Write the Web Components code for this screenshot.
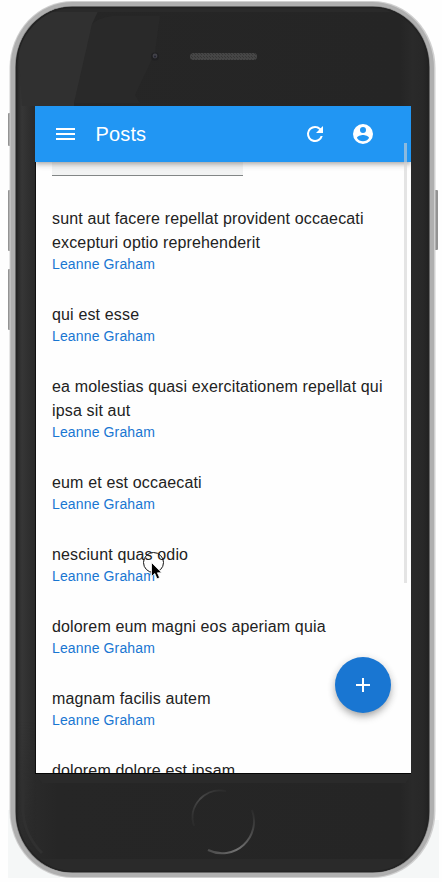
<!DOCTYPE html>
<html lang="en">
<head>
<meta charset="utf-8">
<title>Posts</title>
<style>
html, body { margin: 0; height: 100%; overflow: hidden; background: #fefefe; font-family: "Liberation Sans", Arial, sans-serif; }
</style>
</head>
<body>
<phone-frame>
  <app-screen>
    <app-header slot="header" heading="Posts"></app-header>
    <filter-field></filter-field>
    <post-item author="Leanne Graham">sunt aut facere repellat provident occaecati excepturi optio reprehenderit</post-item>
    <post-item author="Leanne Graham">qui est esse</post-item>
    <post-item author="Leanne Graham">ea molestias quasi exercitationem repellat qui ipsa sit aut</post-item>
    <post-item author="Leanne Graham">eum et est occaecati</post-item>
    <post-item author="Leanne Graham">nesciunt quas odio</post-item>
    <post-item author="Leanne Graham">dolorem eum magni eos aperiam quia</post-item>
    <post-item author="Leanne Graham">magnam facilis autem</post-item>
    <post-item>dolorem dolore est ipsam</post-item>
    <add-button slot="overlay"></add-button>
    <touch-pointer slot="overlay"></touch-pointer>
  </app-screen>
</phone-frame>
<script>
function define(name, html, init) {
  const template = document.createElement('template');
  template.innerHTML = html;
  customElements.define(name, class extends HTMLElement {
    constructor() {
      super();
      this.attachShadow({ mode: 'open' }).append(template.content.cloneNode(true));
    }
    connectedCallback() { if (init) init(this, this.shadowRoot); }
  });
}

define('phone-frame', `
<style>
:host { display: block; position: relative; width: 442px; height: 882px; overflow: hidden; }
svg { position: absolute; inset: 0; }
.screen { position: relative; box-sizing: border-box; width: 442px; height: 882px; padding: 106px 31px 108px 35px; }
</style>
<svg width="442" height="882" viewBox="0 0 442 882">
  <defs>
    <linearGradient id="side" x1="0" x2="1">
      <stop offset="0" stop-color="#262626"/><stop offset=".01" stop-color="#2c2c2c"/>
      <stop offset=".1" stop-color="#262626"/>
      <stop offset=".93" stop-color="#252525"/><stop offset=".96" stop-color="#2a2a2a"/>
      <stop offset=".985" stop-color="#282828"/><stop offset="1" stop-color="#222"/>
    </linearGradient>
    <linearGradient id="rail" x1="0" x2="1"><stop offset="0" stop-color="#262626"/><stop offset=".3" stop-color="#363636"/><stop offset=".65" stop-color="#2f2f2f"/><stop offset="1" stop-color="#292929"/></linearGradient>
    <linearGradient id="fade" x1="0" y1="0" x2="0" y2="1"><stop offset="0" stop-color="#fff"/><stop offset=".85" stop-color="#fff"/><stop offset="1" stop-color="#000"/></linearGradient>
    <mask id="railMask"><rect x="16" y="7" width="90" height="840" fill="url(#fade)"/></mask>
    <pattern id="mesh" width="3" height="3" patternUnits="userSpaceOnUse"><rect width="3" height="3" fill="#464646"/><path d="M0 0h1v1H0zM2 2h1v1H2z" fill="#363636"/></pattern>
    <linearGradient id="ringA" x1="0" y1="1" x2="1" y2="0"><stop offset="0" stop-color="#292929"/><stop offset=".5" stop-color="#484848"/><stop offset="1" stop-color="#292929"/></linearGradient>
    <linearGradient id="ringB" x1="0" y1="1" x2="1" y2="0"><stop offset="0" stop-color="#484848"/><stop offset=".35" stop-color="#737373"/><stop offset="1" stop-color="#292929"/></linearGradient>
    <clipPath id="body"><rect x="16" y="7" width="413" height="865" rx="56" ry="60"/></clipPath>
  </defs>
  <path d="M8 810H60V878H8zM380 820H439V878H380z" fill="#f5f7f7"/>
  <g fill="#939393">
    <rect x="8" y="113" width="4" height="33" rx="1"/><rect x="8" y="190" width="4" height="61" rx="1"/>
    <rect x="8" y="269" width="4" height="61" rx="1"/><rect x="433" y="190" width="5" height="60" rx="1"/>
  </g>
  <rect x="9.5" y="1" width="426" height="877" rx="63" ry="67" fill="#d0d0d0"/>
  <rect x="10.5" y="2" width="423.500" height="875" rx="62" ry="66" fill="#afafaf"/>
  <rect x="15" y="6" width="415" height="867" rx="57" ry="61" fill="#808080"/>
  <rect x="16" y="7" width="413" height="865" rx="56" ry="60" fill="url(#side)"/>
  <g clip-path="url(#body)">
    <path d="M92 24Q98 18 112 16H160L155 53L135 95L140 103H74L78 75z" fill="#292929"/>
    <g mask="url(#railMask)">
      <path d="M16 60H36V850H16z" fill="url(#rail)"/>
      <path d="M16 7H100L92 24L74 103V106H22z" fill="#303030"/>
    </g>
    <path d="M16 7H429V12H16zM16 859H429V872H16z" fill="#2a2a2a"/>
    <path d="M35 774H411L406 783H42z" fill="#2a2a2a"/>
    <path d="M23 780V812Q25 836 42 853" fill="none" stroke="#303030" stroke-width="3"/>
  </g>
  <rect x="16.500" y="7.500" width="412" height="864" rx="56" ry="60" fill="none" stroke="#232323" stroke-width="1.500"/>
  <circle cx="155" cy="56.500" r="4" fill="#202022"/><circle cx="155" cy="56" r="2.400" fill="#424248"/><circle cx="155" cy="56.500" r="1" fill="#222230"/>
  <rect x="190" y="53" width="67" height="7" rx="3.500" fill="url(#mesh)"/>
  <path d="M194 826Q189 811 200 799Q211 788 226 791" fill="none" stroke="url(#ringA)" stroke-width="1.800"/>
  <path d="M208 850A32 32 0 0 0 252 810" fill="none" stroke="url(#ringB)" stroke-width="2"/>
</svg>
<div class="screen"><slot></slot></div>`);

define('app-screen', `
<style>
:host { display: flex; flex-direction: column; position: relative; height: 668px; box-sizing: border-box; overflow: hidden; background: #fefefe; border-bottom: 1px solid #050505; }
.list { flex: 1; min-height: 0; overflow: hidden; padding: 0 16px; border-left: 1px solid #101010; }
.thumb { position: absolute; z-index: 3; left: 369px; top: 37px; width: 3px; height: 440px; background: rgba(210,210,210,.6); }
</style>
<slot name="header"></slot>
<div class="list"><slot></slot></div>
<div class="thumb"></div>
<slot name="overlay"></slot>`);

define('app-header', `
<style>
:host { display: flex; flex: none; align-items: center; position: relative; z-index: 2; box-sizing: border-box; height: 56px; padding: 0 36px 0 18px; background: #2196f3; color: #fff; box-shadow: 0 2px 4px -1px rgba(0,0,0,.22), 0 4px 5px rgba(0,0,0,.12), 0 1px 10px rgba(0,0,0,.06); }
svg { fill: currentColor; display: block; }
h1 { flex: 1; margin: 0 0 0 18.500px; font-size: 20px; line-height: 32px; font-weight: 400; letter-spacing: .15px; }
.actions { display: flex; gap: 24px; }
</style>
<svg width="24" height="24" viewBox="0 0 24 24"><path d="M3 18h19v-2H3zM3 13h19v-2H3zM3 6v2h19V6z"/></svg>
<h1></h1>
<div class="actions">
<svg width="24" height="24" viewBox="0 0 24 24"><path d="M17.650 6.350A7.960 7.960 0 0 0 12 4a8 8 0 1 0 7.730 10h-2.080A6 6 0 1 1 12 6c1.660 0 3.140.690 4.220 1.780L13 11h7V4z"/></svg>
<svg width="24" height="24" viewBox="0 0 24 24"><path d="M12 2a10 10 0 1 0 0 20 10 10 0 0 0 0-20zm0 3a3 3 0 1 1 0 6 3 3 0 0 1 0-6zm0 14.200a7.200 7.200 0 0 1-6-3.220c.030-1.990 4-3.080 6-3.080 1.990 0 5.970 1.090 6 3.080a7.200 7.200 0 0 1-6 3.220z"/></svg>
</div>`, (host, root) => { root.querySelector('h1').textContent = host.getAttribute('heading'); });

define('filter-field', `
<style>
:host { display: block; box-sizing: border-box; width: 191px; height: 14px; margin-bottom: 16px; background: #f2f3f3; border-bottom: 1px solid #828686; }
</style>`);

define('post-item', `
<style>
:host { display: block; padding: 15px 0 14px; }
.title { font-size: 16px; line-height: 24px; letter-spacing: .15px; color: #222; }
.author { margin-top: -1px; font-size: 14px; line-height: 20px; letter-spacing: .14px; color: #1976d2; }
</style>
<div class="title"><slot></slot></div><div class="author"></div>`, (host, root) => {
  root.querySelector('.author').textContent = host.getAttribute('author') || '';
});

define('add-button', `
<style>
:host { display: grid; place-items: center; position: absolute; z-index: 2; left: 300px; top: 551px; width: 56px; height: 56px; border-radius: 50%; background: #1976d2; box-shadow: 0 3px 5px -1px rgba(0,0,0,.22), 0 5px 8px rgba(0,0,0,.12), 0 2px 4px 5px rgba(0,0,0,.04); }
</style>
<svg width="24" height="24" viewBox="0 0 24 24" fill="#fff"><path d="M19 13h-6v6h-2v-6H5v-2h6V5h2v6h6z"/></svg>`);

define('touch-pointer', `
<style>
:host { display: block; position: absolute; z-index: 4; left: 107px; top: 445px; width: 26px; height: 34px; }
svg { display: block; }
</style>
<svg width="26" height="34" viewBox="0 0 26 34"><circle cx="11.500" cy="11.500" r="10" fill="none" stroke="#111" stroke-width="1"/><path d="M9.500 11.500V25.500L12.800 22.500L15 27.800L17.600 26.700L15.400 21.800H19.700z" fill="#000" stroke="#fff" stroke-width=".8"/></svg>`);
</script>
</body>
</html>
